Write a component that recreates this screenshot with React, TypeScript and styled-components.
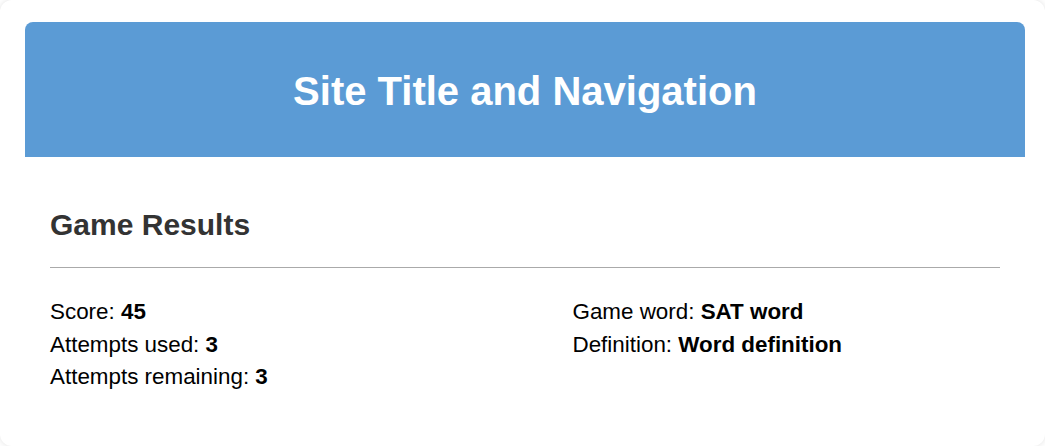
import React from "react";
import styled, { createGlobalStyle } from "styled-components";

const Global = createGlobalStyle`
  html, body { margin: 0; padding: 0; background: #ffffff; }
  body { font-family: "Liberation Sans", Arial, sans-serif; }
`;

const Page = styled.div`
  min-height: 446px;
  box-sizing: border-box;
  padding: 22px 20px 0 25px;
  background: #ffffff;
  border-radius: 12px;
  box-shadow: 0 0 6px rgba(0, 0, 0, 0.12);
`;

const Header = styled.header`
  height: 135px;
  box-sizing: border-box;
  padding-top: 3px;
  background: #5b9bd5;
  border-radius: 8px 8px 0 0;
  display: flex;
  align-items: center;
  justify-content: center;
`;

const Title = styled.h1`
  margin: 0;
  color: #ffffff;
  font-size: 40px;
  font-weight: 700;
`;

const Content = styled.main`
  padding: 51px 25px 25px;
`;

const Heading = styled.h2`
  margin: 0;
  color: #333333;
  font-size: 30px;
  font-weight: 700;
  line-height: 34px;
`;

const Rule = styled.hr`
  margin: 25px 0 28px;
  border: none;
  border-top: 1px solid #aaaaaa;
  height: 0;
`;

const Columns = styled.div`
  display: grid;
  grid-template-columns: 11fr 9fr;
`;

const List = styled.div`
  display: flex;
  flex-direction: column;
`;

const Line = styled.div`
  font-size: 22.4px;
  line-height: 32.5px;
  color: #000000;

  b {
    font-weight: 700;
  }
`;

const App: React.FC = () => (
  <>
    <Global />
    <Page>
      <Header>
        <Title>Site Title and Navigation</Title>
      </Header>
      <Content>
        <Heading>Game Results</Heading>
        <Rule />
        <Columns>
          <List>
            <Line>Score: <b>45</b></Line>
            <Line>Attempts used: <b>3</b></Line>
            <Line>Attempts remaining: <b>3</b></Line>
          </List>
          <List>
            <Line>Game word: <b>SAT word</b></Line>
            <Line>Definition: <b>Word definition</b></Line>
          </List>
        </Columns>
      </Content>
    </Page>
  </>
);

export default App;
